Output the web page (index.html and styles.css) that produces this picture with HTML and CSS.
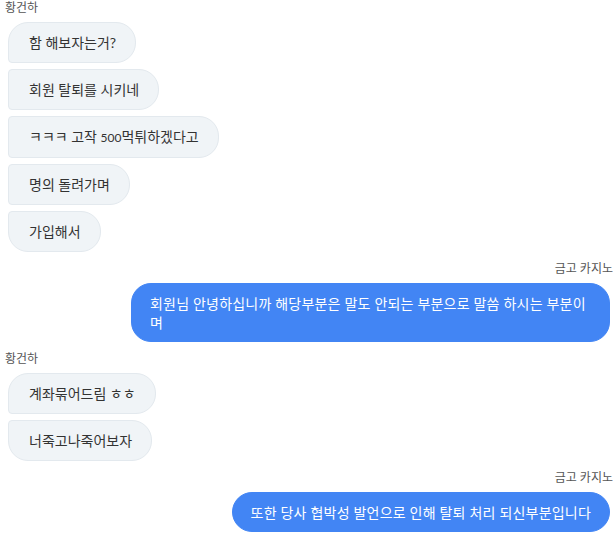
FILE: index.html
```html
<!DOCTYPE html>
<html lang="ko">
<head>
<meta charset="utf-8">
<link rel="stylesheet" href="styles.css">
</head>
<body>
<div class="chat">
  <div class="group in">
    <div class="name">황건하</div>
    <div class="msg first">함 해보자는거?</div>
    <div class="msg">회원 탈퇴를 시키네</div>
    <div class="msg">ㅋㅋㅋ 고작 <span class="num">500</span>먹튀하겠다고</div>
    <div class="msg">명의 돌려가며</div>
    <div class="msg last">가입해서</div>
  </div>
  <div class="group out">
    <div class="name">금고 카지노</div>
    <div class="msg first last">회원님 안녕하십니까 해당부분은 말도 안되는 부분으로 말씀 하시는 부분이며</div>
  </div>
  <div class="group in">
    <div class="name">황건하</div>
    <div class="msg first">계좌묶어드림 ㅎㅎ</div>
    <div class="msg last">너죽고나죽어보자</div>
  </div>
  <div class="group out">
    <div class="name">금고 카지노</div>
    <div class="msg first last">또한 당사 협박성 발언으로 인해 탈퇴 처리 되신부분입니다</div>
  </div>
</div>
</body>
</html>
```

FILE: styles.css
```css
html, body {
  margin: 0;
  padding: 0;
  background: #ffffff;
}

body {
  font-family: "Lato", "Noto Sans CJK KR", sans-serif;
  color: #333333;
}

.chat {
  padding: 0 6px 0 8px;
  display: flex;
  flex-direction: column;
}

.group {
  display: flex;
  flex-direction: column;
  gap: 6px;
  margin-top: 9px;
}

.group:first-child {
  margin-top: 0;
}

.group.in {
  align-items: flex-start;
}

.group.out {
  align-items: flex-end;
}

.name {
  font-size: 12px;
  line-height: 16px;
  color: #555555;
  margin: 0 -3px;
}

.msg {
  font-size: 14px;
  line-height: 19px;
  padding: 10px 19px 10px 20px;
  border: 1px solid transparent;
  border-radius: 4px 20px 20px 4px;
}

.num {
  font-size: 12px;
}

.in .msg {
  background: #f0f4f7;
  border-color: #e3e9ee;
  color: #333333;
}

.in .msg.first {
  border-top-left-radius: 20px;
}

.in .msg.last {
  border-bottom-left-radius: 20px;
}

.out .msg {
  background: #4285f4;
  border-color: #4285f4;
  color: #ffffff;
  border-radius: 20px;
  padding: 10px 18px 9px;
  letter-spacing: 0.2px;
  max-width: 441px;
}
```
